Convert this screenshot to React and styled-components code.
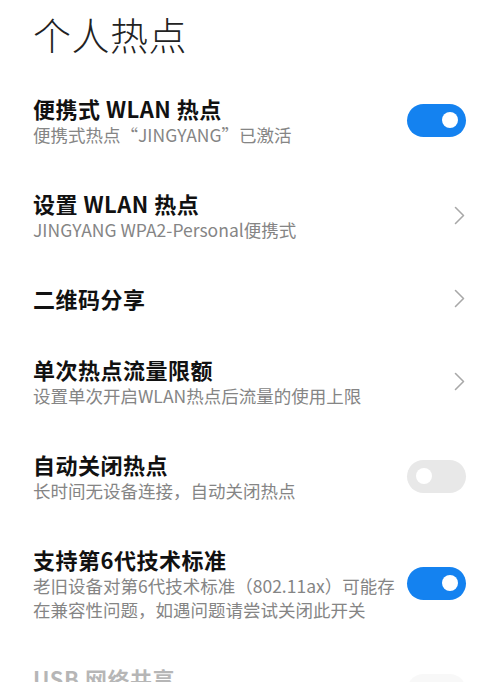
import React from 'react';
import styled, { createGlobalStyle } from 'styled-components';

const GlobalStyle = createGlobalStyle`
  html, body {
    margin: 0;
    padding: 0;
    background: #ffffff;
  }
  body {
    font-family: "Noto Sans CJK SC", "Noto Sans", sans-serif;
    -webkit-font-smoothing: antialiased;
  }
`;

const Page = styled.div`
  width: 500px;
  height: 682px;
  overflow: hidden;
  background: #ffffff;
`;

const Header = styled.h1`
  margin: 0;
  padding: 10px 33px 14.5px;
  font-size: 38px;
  line-height: 48px;
  font-weight: 300;
  color: #222222;
  letter-spacing: 0.5px;
`;

const List = styled.div`
  display: flex;
  flex-direction: column;
`;

const Row = styled.div`
  display: flex;
  align-items: center;
  padding: 20.5px 34px 20.5px 33px;
  opacity: ${({ $disabled }) => ($disabled ? 0.3 : 1)};
`;

const TextBlock = styled.div`
  flex: 1;
  min-width: 0;
  margin-right: 12px;
`;

const Title = styled.div`
  font-size: 22px;
  line-height: 30px;
  font-weight: 700;
  color: #111111;
  letter-spacing: 0.5px;
`;

const Subtitle = styled.div`
  font-size: 17.5px;
  line-height: 24px;
  font-weight: 400;
  color: #858585;
`;

const Track = styled.div`
  position: relative;
  flex: none;
  width: 59px;
  height: 33px;
  border-radius: 17px;
  background: ${({ $on }) => ($on ? '#1482f0' : '#e8e8e8')};
`;

const Knob = styled.span`
  position: absolute;
  top: 8.5px;
  ${({ $on }) => ($on ? 'right: 8.5px;' : 'left: 8.5px;')}
  width: 16px;
  height: 16px;
  border-radius: 50%;
  background: #ffffff;
`;

const ChevronBox = styled.div`
  flex: none;
  width: 59px;
  display: flex;
  justify-content: flex-end;
  padding-right: 1px;
  box-sizing: border-box;
`;

const Toggle = ({ on }) => (
  <Track $on={on}>
    <Knob $on={on} />
  </Track>
);

const Chevron = () => (
  <ChevronBox>
    <svg width="11" height="19" viewBox="0 0 11 19" fill="none">
      <polyline
        points="1.5,1.5 9.5,9.5 1.5,17.5"
        stroke="#a8a8a8"
        strokeWidth="1.6"
        strokeLinecap="round"
        strokeLinejoin="round"
      />
    </svg>
  </ChevronBox>
);

const items = [
  { title: '便携式 WLAN 热点', sub: '便携式热点“JINGYANG”已激活', control: 'on' },
  { title: '设置 WLAN 热点', sub: 'JINGYANG WPA2-Personal便携式', control: 'chevron' },
  { title: '二维码分享', control: 'chevron' },
  { title: '单次热点流量限额', sub: '设置单次开启WLAN热点后流量的使用上限', control: 'chevron' },
  { title: '自动关闭热点', sub: '长时间无设备连接，自动关闭热点', control: 'off' },
  {
    title: '支持第6代技术标准',
    sub: '老旧设备对第6代技术标准（802.11ax）可能存在兼容性问题，如遇问题请尝试关闭此开关',
    control: 'on',
  },
  { title: 'USB 网络共享', sub: '通过USB共享手机的网络连接', control: 'off', disabled: true },
];

const App = () => {
  return (
    <Page>
      <GlobalStyle />
      <Header>个人热点</Header>
      <List>
        {items.map((item) => (
          <Row key={item.title} $disabled={item.disabled}>
            <TextBlock>
              <Title>{item.title}</Title>
              {item.sub && <Subtitle>{item.sub}</Subtitle>}
            </TextBlock>
            {item.control === 'chevron' ? <Chevron /> : <Toggle on={item.control === 'on'} />}
          </Row>
        ))}
      </List>
    </Page>
  );
};

export default App;
